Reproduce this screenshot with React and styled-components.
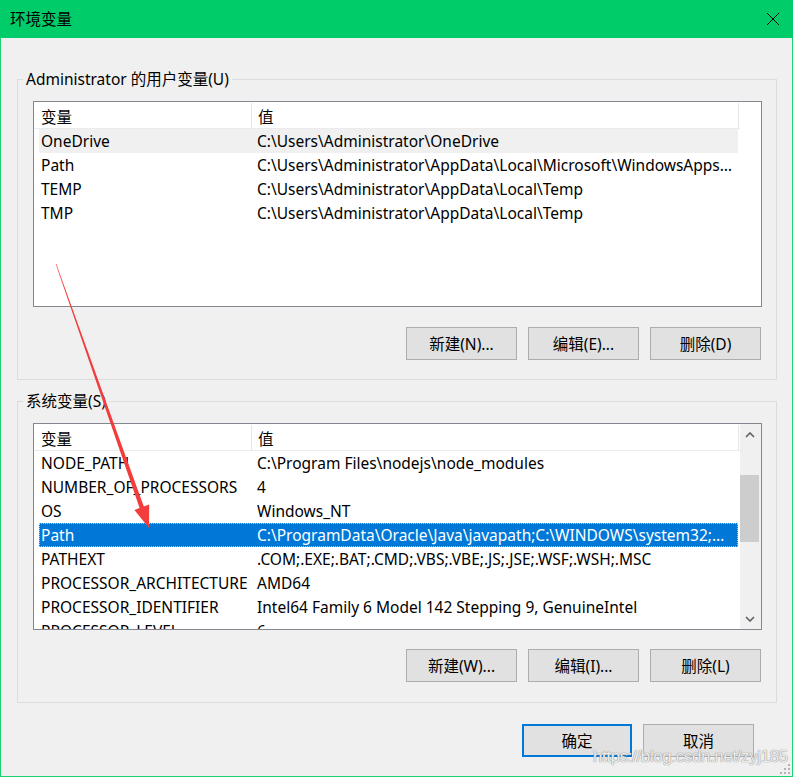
import React from 'react';
import styled, { createGlobalStyle } from 'styled-components';

const GlobalStyle = createGlobalStyle`
  html, body {
    margin: 0;
    padding: 0;
    background: #ffffff;
  }
  body {
    font-family: "Noto Sans", "Noto Sans CJK SC", sans-serif;
    font-size: 15.5px;
    color: #000;
  }
`;

const Window = styled.div`
  position: relative;
  width: 793px;
  height: 777px;
  display: flex;
  flex-direction: column;
  overflow: hidden;
`;

const TitleBar = styled.div`
  height: 38px;
  flex: none;
  background: #00cc6a;
  display: flex;
  align-items: center;
  justify-content: space-between;
  padding: 0 13px 0 10px;
  box-sizing: border-box;
`;

const Title = styled.span`
  font-size: 15.5px;
  line-height: 20px;
`;

const Body = styled.div`
  flex: 1;
  background: #f0f0f0;
  border: 1px solid #1ccf70;
  border-top: none;
  padding: 0 15px 0 16px;
  display: flex;
  flex-direction: column;
`;

const Group = styled.fieldset`
  margin: ${p => p.$top}px 0 0 0;
  padding: 0;
  border: 1px solid #dcdcdc;
  min-width: 0;
`;

const Legend = styled.legend`
  margin-left: 5px;
  padding: 0 3px;
  line-height: 20px;
  font-size: 15.5px;
`;

const GroupInner = styled.div`
  padding: 12px 14px ${p => p.$bottom}px 15px;
  display: flex;
  flex-direction: column;
`;

const ListBox = styled.div`
  height: ${p => p.$height}px;
  border: 1px solid #828790;
  background: #fff;
  box-sizing: border-box;
  display: flex;
  overflow: hidden;
`;

const Table = styled.div`
  width: 706px;
  flex: none;
  display: flex;
  flex-direction: column;
`;

const HeaderRow = styled.div`
  display: flex;
  height: 27px;
  flex: none;
  border-bottom: 1px solid #ebebeb;
  box-sizing: border-box;
`;

const HeaderCell = styled.div`
  width: ${p => p.$w}px;
  box-sizing: border-box;
  border-right: 1px solid #e5e5e5;
  padding: 2px 0 0 ${p => p.$pad}px;
  margin-top: 1px;
  line-height: 24px;
  white-space: nowrap;
`;

const Row = styled.div`
  display: flex;
  height: 24px;
  flex: none;
  margin-left: 5px;
  width: 699px;
  box-sizing: border-box;
  line-height: 22px;
  background: ${p => (p.$selected ? '#0078d7' : p.$hover ? '#f0f0f0' : 'transparent')};
  color: ${p => (p.$selected ? '#fff' : '#000')};
  border: 1px ${p => (p.$selected ? 'dotted #e7c37c' : 'solid transparent')};
`;

const Cell = styled.div`
  width: ${p => p.$w}px;
  box-sizing: border-box;
  padding-left: ${p => p.$pad}px;
  padding-right: ${p => p.$right ?? 4}px;
  white-space: nowrap;
  overflow: hidden;
  text-overflow: ellipsis;
`;

const ScrollBar = styled.div`
  width: 21px;
  flex: none;
  background: #f0f0f0;
  display: flex;
  flex-direction: column;
`;

const ScrollArrow = styled.div`
  height: 21px;
  flex: none;
  display: flex;
  align-items: center;
  justify-content: center;
  padding-right: 2px;
`;

const ScrollTrack = styled.div`
  flex: 1;
`;

const ScrollThumb = styled.div`
  margin: 30px 2px 0 0;
  height: 67px;
  background: #cdcdcd;
`;

const ButtonRow = styled.div`
  display: flex;
  justify-content: flex-end;
  gap: ${p => p.$gap || 11}px;
  margin-top: ${p => p.$top}px;
  margin-right: ${p => p.$right || 1}px;
`;

const Button = styled.button`
  width: ${p => p.$w || 111}px;
  height: 33px;
  box-sizing: border-box;
  background: #e1e1e1;
  border: ${p => (p.$default ? '2px solid #0078d7' : '1px solid #adadad')};
  font-family: "Noto Sans", "Noto Sans CJK SC", sans-serif;
  font-size: 15.5px;
  color: #000;
  padding: 0;
  cursor: default;
`;

const Watermark = styled.div`
  position: absolute;
  left: 593px;
  top: 745px;
  font-family: "Liberation Sans", Arial, sans-serif;
  font-size: 17px;
  letter-spacing: -0.4px;
  line-height: 24px;
  color: rgba(255, 255, 255, 0.85);
  text-shadow: 0 0 1px #8a8a8a, 0 0 1px #8a8a8a;
  pointer-events: none;
  white-space: nowrap;
`;

const Grip = styled.svg`
  position: absolute;
  right: 3px;
  bottom: 3px;
`;

const Overlay = styled.svg`
  position: absolute;
  left: 0;
  top: 0;
  pointer-events: none;
`;

const CloseIcon = () => (
  <svg width="14" height="14" viewBox="0 0 14 14">
    <path d="M1 1 L13 13 M13 1 L1 13" stroke="#000" strokeWidth="1" fill="none" />
  </svg>
);

const Chevron = ({ down }) => (
  <svg width="10" height="6" viewBox="0 0 10 6">
    <path
      d={down ? 'M1 1 L5 5 L9 1' : 'M1 5 L5 1 L9 5'}
      stroke="#606060"
      strokeWidth="1.6"
      fill="none"
    />
  </svg>
);

const userVars = [
  ['OneDrive', 'C:\\Users\\Administrator\\OneDrive'],
  ['Path', 'C:\\Users\\Administrator\\AppData\\Local\\Microsoft\\WindowsApps;C:\\Users\\Administrator\\AppData\\Roaming\\npm'],
  ['TEMP', 'C:\\Users\\Administrator\\AppData\\Local\\Temp'],
  ['TMP', 'C:\\Users\\Administrator\\AppData\\Local\\Temp'],
];

const systemVars = [
  ['NODE_PATH', 'C:\\Program Files\\nodejs\\node_modules'],
  ['NUMBER_OF_PROCESSORS', '4'],
  ['OS', 'Windows_NT'],
  ['Path', 'C:\\ProgramData\\Oracle\\Java\\javapath;C:\\WINDOWS\\system32;C:\\WINDOWS'],
  ['PATHEXT', '.COM;.EXE;.BAT;.CMD;.VBS;.VBE;.JS;.JSE;.WSF;.WSH;.MSC'],
  ['PROCESSOR_ARCHITECTURE', 'AMD64'],
  ['PROCESSOR_IDENTIFIER', 'Intel64 Family 6 Model 142 Stepping 9, GenuineIntel'],
  ['PROCESSOR_LEVEL', '6'],
];

const VarList = ({ rows, height, selected, hover, scroll }) => (
  <ListBox $height={height}>
    <Table>
      <HeaderRow>
        <HeaderCell $w={218} $pad={7}>变量</HeaderCell>
        <HeaderCell $w={487} $pad={6}>值</HeaderCell>
      </HeaderRow>
      {rows.map(([name, value], i) => (
        <Row key={name + i} $selected={i === selected} $hover={i === hover}>
          <Cell $w={211} $pad={1} $right={0}>{name}</Cell>
          <Cell $w={486} $pad={6}>{value}</Cell>
        </Row>
      ))}
    </Table>
    {scroll && (
      <ScrollBar>
        <ScrollArrow><Chevron /></ScrollArrow>
        <ScrollTrack><ScrollThumb /></ScrollTrack>
        <ScrollArrow><Chevron down /></ScrollArrow>
      </ScrollBar>
    )}
  </ListBox>
);

export default function App() {
  return (
    <>
      <GlobalStyle />
      <Window>
        <TitleBar>
          <Title>环境变量</Title>
          <CloseIcon />
        </TitleBar>
        <Body>
          <Group $top={31}>
            <Legend>Administrator 的用户变量(U)</Legend>
            <GroupInner $bottom={19}>
              <VarList rows={userVars} height={206} hover={0} />
              <ButtonRow $top={20}>
                <Button>新建(N)...</Button>
                <Button>编辑(E)...</Button>
                <Button>删除(D)</Button>
              </ButtonRow>
            </GroupInner>
          </Group>
          <Group $top={11}>
            <Legend>系统变量(S)</Legend>
            <GroupInner $bottom={20}>
              <VarList rows={systemVars} height={207} selected={3} scroll />
              <ButtonRow $top={19}>
                <Button>新建(W)...</Button>
                <Button>编辑(I)...</Button>
                <Button>删除(L)</Button>
              </ButtonRow>
            </GroupInner>
          </Group>
          <ButtonRow $top={21} $right={23}>
            <Button $w={110} $default>确定</Button>
            <Button>取消</Button>
          </ButtonRow>
        </Body>
        <Watermark>https://blog.csdn.net/zyj185</Watermark>
        <Grip width="10" height="10" viewBox="0 0 10 10">
          <g fill="#b4b4b4">
            <rect x="8" y="0" width="2" height="2" />
            <rect x="4" y="4" width="2" height="2" />
            <rect x="8" y="4" width="2" height="2" />
            <rect x="0" y="8" width="2" height="2" />
            <rect x="4" y="8" width="2" height="2" />
            <rect x="8" y="8" width="2" height="2" />
          </g>
        </Grip>
        <Overlay width="793" height="777" viewBox="0 0 793 777">
          <polygon
            points="55.7,264.1 139.6,508 134.4,510 149,528 149.2,504.6 143.8,506.6 56.3,263.9"
            fill="#f33c3c"
          />
        </Overlay>
      </Window>
    </>
  );
}
